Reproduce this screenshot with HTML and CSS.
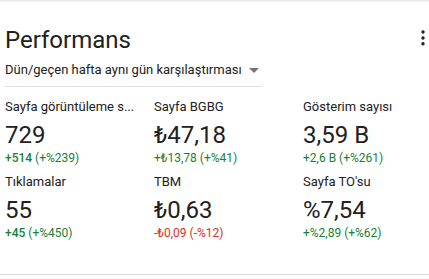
FILE: index.html
```html
<!DOCTYPE html>
<html lang="tr">
<head>
  <meta charset="UTF-8" />
  <title>Performans</title>
  <link rel="stylesheet" href="styles.css">
</head>
<body>

  <div class="shade"></div>

  <div class="card">
    <div class="card-header">
      <div class="title">Performans</div>
      <svg class="more" width="8" height="16" viewBox="0 0 8 16">
        <circle cx="4" cy="2" r="1.7" />
        <circle cx="4" cy="8" r="1.7" />
        <circle cx="4" cy="13.7" r="1.7" />
      </svg>
    </div>

    <div class="compare">
      <span>Dün/geçen hafta aynı gün karşılaştırması</span>
      <span class="caret"></span>
    </div>

    <div class="divider"></div>

    <div class="stats">
      <div class="stat">
        <div class="label">Sayfa görüntüleme s...</div>
        <div class="value">729</div>
        <div class="change up"><b>+514</b> (+%239)</div>
      </div>
      <div class="stat">
        <div class="label">Sayfa BGBG</div>
        <div class="value">₺47,18</div>
        <div class="change up">+₺13,78 (+%41)</div>
      </div>
      <div class="stat">
        <div class="label">Gösterim sayısı</div>
        <div class="value">3,59 B</div>
        <div class="change up">+2,6 B (+%261)</div>
      </div>
      <div class="stat">
        <div class="label">Tıklamalar</div>
        <div class="value">55</div>
        <div class="change up"><b>+45</b> (+%450)</div>
      </div>
      <div class="stat">
        <div class="label">TBM</div>
        <div class="value">₺0,63</div>
        <div class="change down">-₺0,09 (-%12)</div>
      </div>
      <div class="stat">
        <div class="label">Sayfa TO'su</div>
        <div class="value">%7,54</div>
        <div class="change up">+%2,89 (+%62)</div>
      </div>
    </div>
  </div>

</body>
</html>
```

FILE: styles.css
```css
html, body {
  margin: 0;
  padding: 0;
  height: 100%;
  overflow: hidden;
  background: #fff;
  font-family: Roboto, "Liberation Sans", sans-serif;
  color: #212121;
}

.shade {
  height: 3px;
  background: linear-gradient(#e6e6e6, #fff);
}

.card {
  height: 272px;
  box-sizing: border-box;
  border-bottom: 1px solid #dcdcdc;
  padding: 22.5px 2px 0 5px;
}

.card-header {
  display: flex;
  justify-content: space-between;
  align-items: flex-start;
}

.title {
  font-size: 24px;
  line-height: 28px;
}

.more {
  fill: #212121;
  margin-top: 4.5px;
}

.compare {
  display: flex;
  align-items: center;
  gap: 7px;
  margin-top: 6px;
  font-size: 13px;
  line-height: 20px;
}

.caret {
  width: 0;
  height: 0;
  border-left: 5px solid transparent;
  border-right: 5px solid transparent;
  border-top: 5px solid #757575;
  margin-top: 1px;
}

.divider {
  width: 258px;
  height: 1px;
  background: #e0e0e0;
  margin-top: 6px;
}

.stats {
  display: grid;
  grid-template-columns: 149px 149px 1fr;
  row-gap: 6px;
  padding-top: 10px;
}

.label {
  font-size: 13px;
  line-height: 20px;
}

.value {
  font-size: 24px;
  line-height: 30px;
  margin-top: 3px;
}

.change {
  font-size: 12px;
  line-height: 16px;
}

.change b {
  font-weight: 500;
}

.up {
  color: #188038;
}

.down {
  color: #d93025;
}
```
